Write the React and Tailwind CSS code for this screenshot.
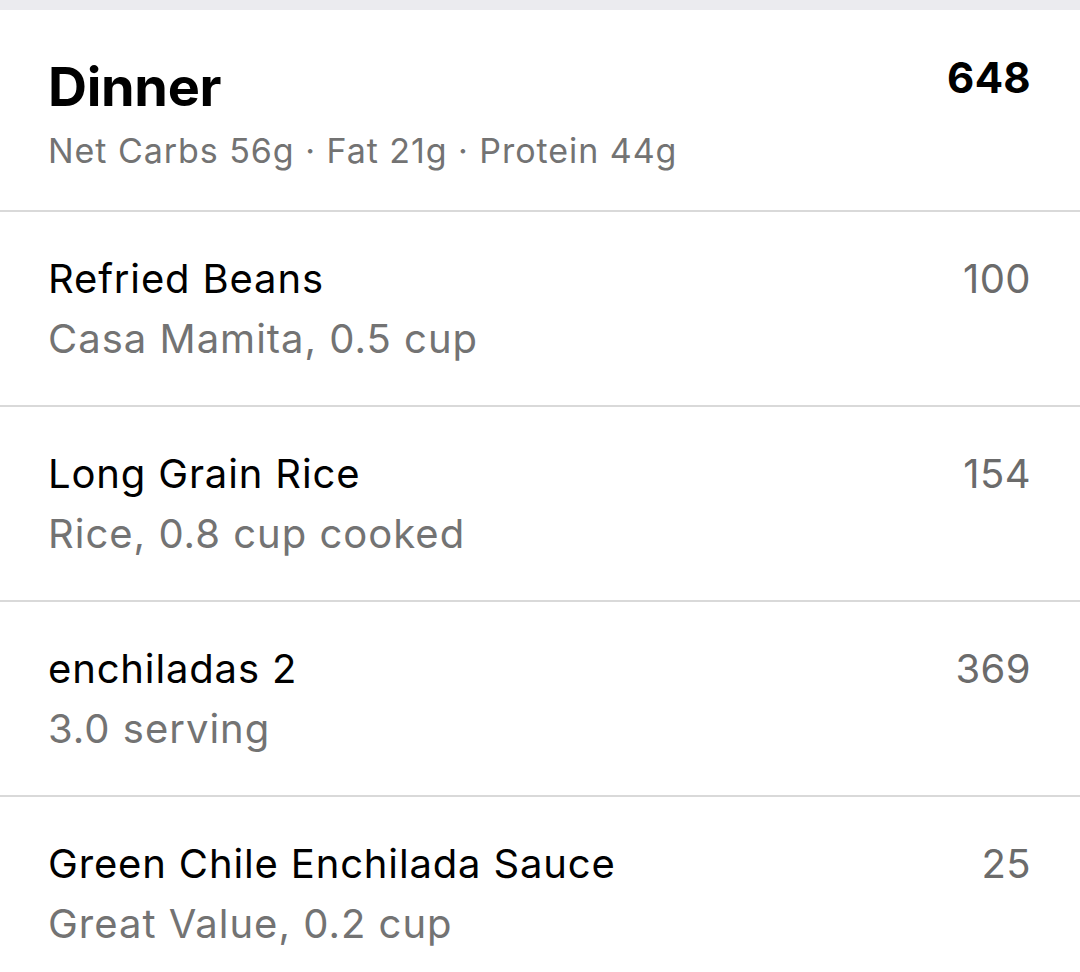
import React from "react";

const items = [
  { name: "Refried Beans", detail: "Casa Mamita, 0.5 cup", cal: "100" },
  { name: "Long Grain Rice", detail: "Rice, 0.8 cup cooked", cal: "154" },
  { name: "enchiladas 2", detail: "3.0 serving", cal: "369" },
  { name: "Green Chile Enchilada Sauce", detail: "Great Value, 0.2 cup", cal: "25" },
];

export default function App() {
  return (
    <div
      className="w-[1080px] h-[972px] overflow-hidden bg-white"
      style={{ fontFamily: "Inter, 'Noto Sans', sans-serif" }}
    >
      <div className="h-[10px] bg-[#ebebef]" />
      <div className="flex items-start justify-between pl-[48px] pr-[49px] pt-[44px] pb-[39px] border-b-2 border-[#d9d9d9]">
        <div>
          <div className="text-[54px] leading-[65px] font-bold text-black tracking-[-0.3px]">Dinner</div>
          <div className="mt-[11px] text-[34px] leading-[41px] text-[#737373] tracking-[0.95px]">
            Net Carbs 56g · Fat 21g · Protein 44g
          </div>
        </div>
        <div className="text-[42px] leading-[50px] font-bold text-black -mt-[1px] tracking-[0.3px]">648</div>
      </div>
      {items.map((it) => (
        <div
          key={it.name}
          className="flex items-start justify-between pl-[48px] pr-[49px] pt-[43px] pb-[42px] border-b-2 border-[#d9d9d9]"
        >
          <div>
            <div className="text-[40px] leading-[48px] text-black tracking-[0.85px]">{it.name}</div>
            <div className="mt-[12px] text-[40px] leading-[48px] text-[#737373] tracking-[1px]">{it.detail}</div>
          </div>
          <div className="text-[40px] leading-[48px] text-[#6b6b6b] tracking-[0.4px]">{it.cal}</div>
        </div>
      ))}
    </div>
  );
}
